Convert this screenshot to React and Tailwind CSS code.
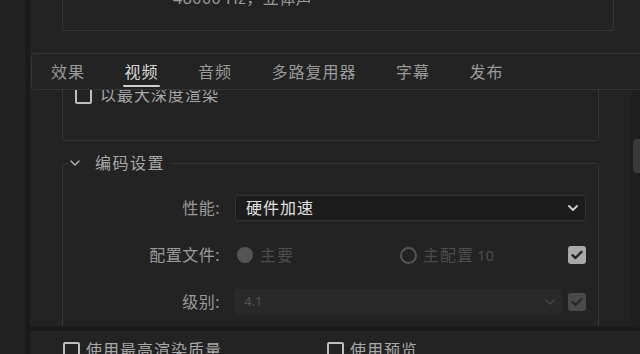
import React from "react";

const Chevron = ({ className, stroke = "#cccccc", w = 10, h = 6, sw = 1.8 }) => (
  <svg width={w} height={h} viewBox="0 0 10 6" className={className} fill="none">
    <path d="M1 1 L5 5 L9 1" stroke={stroke} strokeWidth={sw} strokeLinecap="round" strokeLinejoin="round" />
  </svg>
);

const Check = ({ color }) => (
  <svg width="12" height="10" viewBox="0 0 12 10" fill="none">
    <path d="M1.5 5.2 L4.5 8 L10.5 1.8" stroke={color} strokeWidth="2.4" strokeLinecap="round" strokeLinejoin="round" />
  </svg>
);

export default function App() {
  const tabs = ["效果", "视频", "音频", "多路复用器", "字幕", "发布"];
  return (
    <div className="w-[640px] h-[354px] overflow-hidden flex bg-[#232323] font-['Noto_Sans','Noto_Sans_CJK_SC',sans-serif]">
      <div className="w-[25px] shrink-0 bg-[#222222]" />
      <div className="w-[5px] shrink-0 bg-[#1a1a1a]" />
      <div className="flex-1 min-w-0 flex flex-col">
        {/* top area */}
        <div className="h-[53px] shrink-0 pl-[32px] pr-[26px]">
          <div className="h-[31px] border-x border-b border-[#363636] rounded-b-[3px] overflow-hidden">
            <div className="mt-[-12px] pl-[110px] text-[16px] leading-[20px] tracking-[0.5px] text-[#9a9a9a] whitespace-nowrap">
              48000 Hz，立体声
            </div>
          </div>
        </div>

        {/* tab bar */}
        <div className="h-[37px] shrink-0 ml-[1px] border-y border-l border-[#363636] rounded-l-[4px] flex items-center pl-[19px] gap-[39.5px]">
          {tabs.map((t) => (
            <span
              key={t}
              className={
                "relative text-[16px] leading-[24px] tracking-[1px] whitespace-nowrap " +
                (t === "视频" ? "text-[#d6d6d6]" : "text-[#9a9a9a]")
              }
            >
              {t}
              {t === "视频" && (
                <span className="absolute left-[-2px] right-[-1px] bottom-[-3px] h-[2px] bg-[#cfcfcf] rounded-[1px]" />
              )}
            </span>
          ))}
        </div>

        {/* middle */}
        <div className="h-[236px] shrink-0 flex">
          <div className="flex-1 min-w-0 overflow-hidden">
            {/* box 1 */}
            <div className="mt-[-10px] ml-[32px] w-[537px] border border-[#363636] rounded-[3px] pt-[6px] pb-[36px] pl-[12px]">
              <div className="flex items-center h-[17px]">
                <div className="w-[17px] h-[17px] border-2 border-[#bdbdbd] rounded-[2px]" />
                <span className="ml-[8px] text-[16px] leading-[17px] tracking-[1px] text-[#a8a8a8] whitespace-nowrap">
                  以最大深度渲染
                </span>
              </div>
            </div>

            {/* fieldset */}
            <fieldset className="mt-[10px] ml-[32px] w-[537px] border border-[#363636] rounded-[3px] pb-[20px]">
              <legend className="ml-[5px] pl-[2px] pr-[6px] h-[24px] flex items-center">
                <Chevron stroke="#aaaaaa" sw={1.6} />
                <span className="ml-[15px] text-[16px] leading-[24px] tracking-[1.5px] text-[#a8a8a8] whitespace-nowrap">
                  编码设置
                </span>
              </legend>

              <div className="pt-[20px] flex flex-col gap-[21px]">
                {/* 性能 */}
                <div className="flex items-center h-[26px]">
                  <div className="w-[157px] mr-[15px] text-right text-[16px] tracking-[0.5px] text-[#9a9a9a] whitespace-nowrap">
                    性能:
                  </div>
                  <div className="w-[351px] h-[26px] bg-[#1c1c1c] border border-[#333333] rounded-[3px] flex items-center justify-between pl-[10px] pr-[7px]">
                    <span className="text-[16px] tracking-[1px] text-[#e0e0e0] whitespace-nowrap">硬件加速</span>
                    <Chevron stroke="#cfcfcf" sw={1.8} />
                  </div>
                </div>

                {/* 配置文件 */}
                <div className="flex items-center h-[26px]">
                  <div className="w-[157px] mr-[15px] text-right text-[16px] tracking-[0.5px] text-[#9a9a9a] whitespace-nowrap">
                    配置文件:
                  </div>
                  <div className="w-[351px] flex items-center">
                    <div className="w-[165px] flex items-center pl-[2px]">
                      <div className="w-[16px] h-[16px] rounded-full bg-[#545454]" />
                      <span className="ml-[7px] text-[16px] tracking-[1px] text-[#4c4c4c] whitespace-nowrap">主要</span>
                    </div>
                    <div className="flex-1 flex items-center">
                      <div className="w-[17px] h-[17px] rounded-full border-[2.5px] border-[#555555]" />
                      <span className="ml-[6px] text-[16px] tracking-[1px] text-[#4c4c4c] whitespace-nowrap">主配置</span>
                      <span className="ml-[3px] text-[15px] text-[#4c4c4c]">10</span>
                    </div>
                    <div className="w-[18px] h-[18px] rounded-[3px] bg-[#a9a9a9] flex items-center justify-center">
                      <Check color="#262626" />
                    </div>
                  </div>
                </div>

                {/* 级别 */}
                <div className="flex items-center h-[26px]">
                  <div className="w-[157px] mr-[15px] text-right text-[16px] tracking-[0.5px] text-[#9a9a9a] whitespace-nowrap">
                    级别:
                  </div>
                  <div className="w-[327px] h-[26px] bg-[#292929] rounded-[3px] flex items-center justify-between pl-[9px] pr-[7px]">
                    <span className="text-[13px] text-[#545454]">4.1</span>
                    <Chevron stroke="#474747" sw={1.6} />
                  </div>
                  <div className="ml-[6px] w-[18px] h-[18px] rounded-[3px] bg-[#4a4a4a] flex items-center justify-center">
                    <Check color="#2a2a2a" />
                  </div>
                </div>
              </div>
            </fieldset>
          </div>
          <div className="w-[9px] shrink-0 bg-[#1f1f1f] pt-[49px] pl-[2px] overflow-hidden">
            <div className="w-[12px] h-[34px] rounded-[4px] bg-[#3a3a3a]" />
          </div>
        </div>

        {/* dark band */}
        <div className="h-[5px] shrink-0 bg-[#1a1a1a]" />

        {/* bottom */}
        <div className="h-[23px] shrink-0 flex items-start pt-[11px] pl-[33px]">
          <div className="w-[264px] flex items-center">
            <div className="w-[17px] h-[17px] border-2 border-[#bdbdbd] rounded-[2px] shrink-0" />
            <span className="ml-[6px] text-[16px] leading-[17px] tracking-[1px] text-[#a8a8a8] whitespace-nowrap">
              使用最高渲染质量
            </span>
          </div>
          <div className="flex items-center">
            <div className="w-[17px] h-[17px] border-2 border-[#bdbdbd] rounded-[2px] shrink-0" />
            <span className="ml-[6px] text-[16px] leading-[17px] tracking-[1px] text-[#a8a8a8] whitespace-nowrap">
              使用预览
            </span>
          </div>
        </div>
      </div>
    </div>
  );
}
